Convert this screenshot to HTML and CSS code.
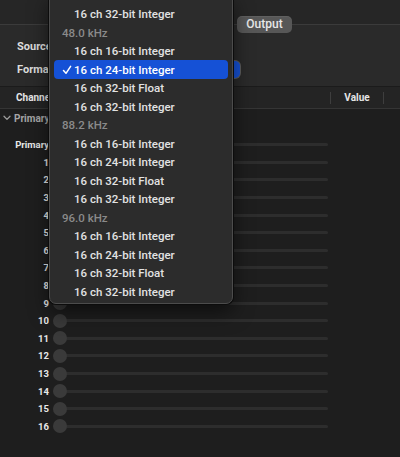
FILE: index.html
```html
<!DOCTYPE html>
<html lang="en">
<head>
<meta charset="utf-8">
<title>Output Format</title>
<link rel="stylesheet" href="styles.css">
</head>
<body>
<div class="window">
  <section class="settings">
    <div class="segmented">
      <span class="seg">Input</span>
      <span class="seg seg-on">Output</span>
    </div>
    <div class="field">
      <span class="field-label">Source:</span>
      <span class="popup popup-plain"></span>
    </div>
    <div class="field">
      <span class="field-label">Format:</span>
      <span class="popup popup-active">
        <svg class="popup-arrows" width="7" height="10" viewBox="0 0 7 10"><path d="M1 4 L3.5 1.5 L6 4 M1 6 L3.5 8.5 L6 6" fill="none" stroke="#fff" stroke-width="1.4" stroke-linecap="round" stroke-linejoin="round"/></svg>
      </span>
    </div>
  </section>

  <div class="table-head">
    <span class="col-channel">Channel</span>
    <span class="col-divider"></span>
    <span class="col-value">Value</span>
    <span class="col-divider"></span>
  </div>

  <div class="group-row">
    <svg class="disclosure" width="8" height="6" viewBox="0 0 8 6"><path d="M1 1.2 L4 4.4 L7 1.2" fill="none" stroke="#9a9a9a" stroke-width="1.3" stroke-linecap="round" stroke-linejoin="round"/></svg>
    <span>Primary</span>
  </div>

  <div class="rows">
    <div class="row"><span class="ch">Primary</span><span class="slider"><span class="track"></span><span class="knob"></span></span></div>
    <div class="row"><span class="ch">1</span><span class="slider"><span class="track"></span><span class="knob"></span></span></div>
    <div class="row"><span class="ch">2</span><span class="slider"><span class="track"></span><span class="knob"></span></span></div>
    <div class="row"><span class="ch">3</span><span class="slider"><span class="track"></span><span class="knob"></span></span></div>
    <div class="row"><span class="ch">4</span><span class="slider"><span class="track"></span><span class="knob"></span></span></div>
    <div class="row"><span class="ch">5</span><span class="slider"><span class="track"></span><span class="knob"></span></span></div>
    <div class="row"><span class="ch">6</span><span class="slider"><span class="track"></span><span class="knob"></span></span></div>
    <div class="row"><span class="ch">7</span><span class="slider"><span class="track"></span><span class="knob"></span></span></div>
    <div class="row"><span class="ch">8</span><span class="slider"><span class="track"></span><span class="knob"></span></span></div>
    <div class="row"><span class="ch">9</span><span class="slider"><span class="track"></span><span class="knob"></span></span></div>
    <div class="row"><span class="ch">10</span><span class="slider"><span class="track"></span><span class="knob"></span></span></div>
    <div class="row"><span class="ch">11</span><span class="slider"><span class="track"></span><span class="knob"></span></span></div>
    <div class="row"><span class="ch">12</span><span class="slider"><span class="track"></span><span class="knob"></span></span></div>
    <div class="row"><span class="ch">13</span><span class="slider"><span class="track"></span><span class="knob"></span></span></div>
    <div class="row"><span class="ch">14</span><span class="slider"><span class="track"></span><span class="knob"></span></span></div>
    <div class="row"><span class="ch">15</span><span class="slider"><span class="track"></span><span class="knob"></span></span></div>
    <div class="row"><span class="ch">16</span><span class="slider"><span class="track"></span><span class="knob"></span></span></div>
  </div>

  <!-- format popup menu, open over the window -->
  <div class="menu">
    <div class="mi">16 ch 32-bit Integer</div>
    <div class="mh">48.0 kHz</div>
    <div class="mi">16 ch 16-bit Integer</div>
    <div class="mi mi-on"><svg class="check" width="10" height="10" viewBox="0 0 10 10"><path d="M1.5 5.6 L4 8.3 L8.6 1.4" fill="none" stroke="#fff" stroke-width="1.5" stroke-linecap="round" stroke-linejoin="round"/></svg>16 ch 24-bit Integer</div>
    <div class="mi">16 ch 32-bit Float</div>
    <div class="mi">16 ch 32-bit Integer</div>
    <div class="mh">88.2 kHz</div>
    <div class="mi">16 ch 16-bit Integer</div>
    <div class="mi">16 ch 24-bit Integer</div>
    <div class="mi">16 ch 32-bit Float</div>
    <div class="mi">16 ch 32-bit Integer</div>
    <div class="mh">96.0 kHz</div>
    <div class="mi">16 ch 16-bit Integer</div>
    <div class="mi">16 ch 24-bit Integer</div>
    <div class="mi">16 ch 32-bit Float</div>
    <div class="mi">16 ch 32-bit Integer</div>
  </div>
</div>
</body>
</html>
```

FILE: styles.css
```css
* { box-sizing: border-box; }

html, body {
  margin: 0;
  padding: 0;
  background: #1e1e1e;
}

.window {
  position: relative;
  width: 400px;
  height: 457px;
  overflow: hidden;
  background: #1e1e1e;
  font-family: Roboto, Inter, "Liberation Sans", sans-serif;
  color: #e4e4e4;
}

/* tab box: title strip, box edge, then the box body */
.settings {
  height: 86px;
  padding-top: 16px;
  background: linear-gradient(#262626 0 24px, #3b3b3b 24px 25px, #2a2a2a 25px);
}

.segmented {
  display: flex;
  padding-left: 185px;
  height: 17px;
}

.seg {
  width: 52px;
  height: 17px;
  font-size: 12px;
  font-weight: 500;
  line-height: 17px;
  text-align: center;
  color: #e8e8e8;
}

.seg-on {
  width: 55px;
  border-radius: 5px;
  background: #575757;
  box-shadow: inset 0 1px 0 rgba(255,255,255,0.06);
}

.field {
  display: grid;
  grid-template-columns: 44px 179px;
  align-items: center;
  height: 18px;
  margin-top: 4px;
  padding-left: 17px;
}

.field + .field { margin-top: 5px; }

.field-label {
  font-size: 11px;
  font-weight: 700;
  color: #dcdcdc;
  white-space: nowrap;
}

.popup {
  display: flex;
  align-items: center;
  height: 17px;
  border-radius: 5px;
  padding: 0 6px 0 8px;
}

.popup-plain {
  width: 120px;
  background: #4a4a4a;
}

.popup-active {
  justify-content: flex-end;
  background: #1652d6;
  box-shadow: 0 0 0 1px #5c5c5c;
}

.popup-arrows { display: block; }

/* table header */
.table-head {
  display: flex;
  align-items: center;
  height: 23px;
  padding-left: 16px;
  background: #242424;
  border-top: 1px solid #1b1b1b;
  border-bottom: 1px solid #353535;
  font-size: 10px;
  font-weight: 700;
  color: #e6e6e6;
}

.col-channel { width: 314px; }

.col-divider {
  width: 1px;
  height: 12px;
  background: #3e3e3e;
}

.col-value {
  width: 52px;
  text-align: center;
}

.group-row {
  display: flex;
  align-items: center;
  gap: 3px;
  height: 18px;
  padding-left: 3px;
  font-size: 10px;
  font-weight: 700;
  color: #a6a6a6;
}

.disclosure { display: block; }

.rows { padding-top: 9px; }

.row {
  display: grid;
  grid-template-columns: 49px 275px;
  column-gap: 4px;
  align-items: center;
  height: 17.6px;
}

.ch {
  text-align: right;
  font-size: 9.5px;
  font-weight: 700;
  color: #e8e8e8;
}

/* track and knob stacked in one grid cell */
.slider {
  display: grid;
  align-items: center;
}

.track, .knob { grid-area: 1 / 1; }

.track {
  height: 3px;
  border-radius: 2px;
  background: #2d2d2d;
}

.knob {
  width: 14px;
  height: 14px;
  border-radius: 50%;
  background: #3a3a3a;
}

/* open popup menu */
.menu {
  position: absolute;
  left: 49px;
  top: -5px;
  width: 184px;
  padding: 8.75px 4px 2px;
  background: #2c2c2c;
  border: 1px solid #4c4c4c;
  border-radius: 0 0 7px 7px;
  box-shadow: 0 0 0 1px #0c0c0c, 0 8px 20px rgba(0,0,0,0.55);
  font-size: 11.5px;
  font-weight: 500;
}

.mi, .mh {
  display: flex;
  align-items: center;
  height: 18.5px;
  border-radius: 4px;
  white-space: nowrap;
}

.mi {
  padding-left: 20px;
  color: #e2e2e2;
}

.mh {
  padding-left: 8px;
  color: #8a8a8a;
}

.mi-on {
  padding-left: 8px;
  background: #1551d6;
  color: #fff;
}

.check {
  display: block;
  width: 10px;
  margin-right: 2px;
}
```
